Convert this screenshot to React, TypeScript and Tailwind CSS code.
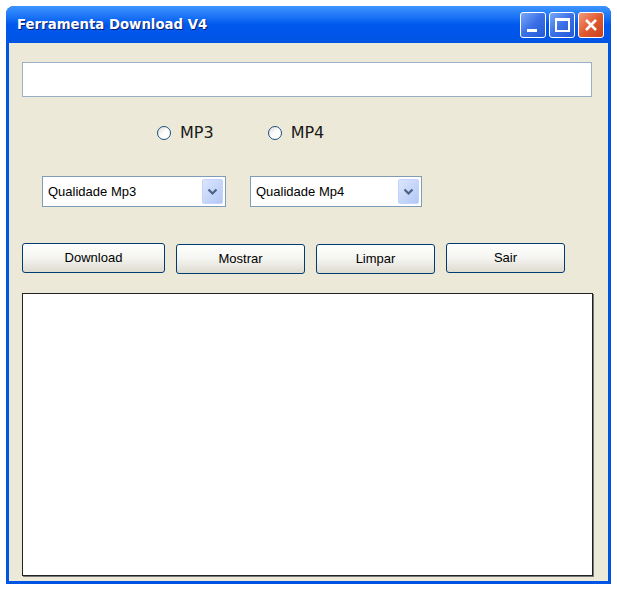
import { useState } from "react";

function Radio({ label }: { label: string }) {
  return (
    <label className="flex items-center gap-[9px]">
      <span className="w-[14px] h-[14px] rounded-full border border-[#1c5180] bg-gradient-to-br from-[#dcdcd6] via-white to-white" />
      <span className="text-[16px] text-[#1a1a1a]">{label}</span>
    </label>
  );
}

function Combo({ label, width }: { label: string; width: string }) {
  return (
    <div className={`${width} h-[31px] bg-white border border-[#7f9db9] flex items-center justify-between pl-[5px] pr-[2px]`}>
      <span className="text-[13px] text-black font-['Liberation_Sans',sans-serif]">{label}</span>
      <span className="w-[21px] h-[25px] rounded-[2px] bg-gradient-to-br from-[#dbe6fd] to-[#b3c8f5] border border-[#c3d3fd] flex items-center justify-center">
        <svg width="11" height="8" viewBox="0 0 11 8">
          <path d="M1.5 1.5 L5.5 5.5 L9.5 1.5" fill="none" stroke="#4d6185" strokeWidth="2.2" />
        </svg>
      </span>
    </div>
  );
}

function Btn({ label, width, extra = "" }: { label: string; width: string; extra?: string }) {
  return (
    <button
      className={`${width} ${extra} h-[30px] rounded-[3px] border border-[#003c74] bg-gradient-to-b from-white via-[#f4f4f0] to-[#dedbd0] text-[13px] text-black font-['Liberation_Sans',sans-serif]`}
    >
      {label}
    </button>
  );
}

export default function App() {
  const [url] = useState("");

  return (
    <div className="w-[617px] h-[591px] bg-white pt-[6px] pl-[6px] font-['DejaVu_Sans',sans-serif]">
      <div className="w-[605px] h-[578px] flex flex-col rounded-t-[8px] overflow-hidden bg-[#0054e3]">
        {/* title bar */}
        <div className="h-[37px] shrink-0 flex items-center justify-between pl-[11px] pr-[7px] bg-gradient-to-b from-[#3d95ff] via-[#0058ee] to-[#0054e3]">
          <span className="text-white font-bold text-[13.3px] [text-shadow:1px_1px_0_#0a1e6e]">
            Ferramenta Download V4
          </span>
          <div className="flex gap-[3px] items-center mt-[1px]">
            <span className="w-[26px] h-[26px] rounded-[3px] border border-white bg-gradient-to-br from-[#7ba7f7] via-[#3a6fe6] to-[#2459d8] flex items-end pl-[6px] pb-[5px]">
              <span className="w-[10px] h-[3px] bg-white" />
            </span>
            <span className="w-[26px] h-[26px] rounded-[3px] border border-white bg-gradient-to-br from-[#7ba7f7] via-[#3a6fe6] to-[#2459d8] flex items-center justify-center">
              <span className="w-[15px] h-[14px] border-2 border-white border-t-[3px]" />
            </span>
            <span className="w-[26px] h-[26px] rounded-[3px] border border-white bg-gradient-to-br from-[#f09a7a] via-[#e05a2f] to-[#c8401a] flex items-center justify-center">
              <svg width="14" height="14" viewBox="0 0 14 14">
                <path d="M2 2 L12 12 M12 2 L2 12" stroke="white" strokeWidth="2.6" />
              </svg>
            </span>
          </div>
        </div>

        {/* client area */}
        <div className="mx-[3px] mb-[3px] flex-1 bg-[#ece9d8] flex flex-col px-[13px]">
          <input
            value={url}
            readOnly
            className="mt-[19px] w-[570px] h-[35px] bg-white border border-[#98b0c8] outline-none"
          />

          <div className="mt-[26px] h-[20px] flex items-center gap-[54px] pl-[135px]">
            <Radio label="MP3" />
            <Radio label="MP4" />
          </div>

          <div className="mt-[33px] flex gap-[24px] pl-[20px]">
            <Combo label="Qualidade Mp3" width="w-[184px]" />
            <Combo label="Qualidade Mp4" width="w-[172px]" />
          </div>

          <div className="mt-[36px] flex items-start gap-[11px]">
            <Btn label="Download" width="w-[143px]" />
            <Btn label="Mostrar" width="w-[129px]" extra="mt-[1px]" />
            <Btn label="Limpar" width="w-[119px]" extra="mt-[1px]" />
            <Btn label="Sair" width="w-[119px]" />
          </div>

          <div className="mt-[19px] w-[571px] h-[283px] bg-white border border-[#222] shadow-[1px_1px_0_#777]" />
        </div>
      </div>
    </div>
  );
}
